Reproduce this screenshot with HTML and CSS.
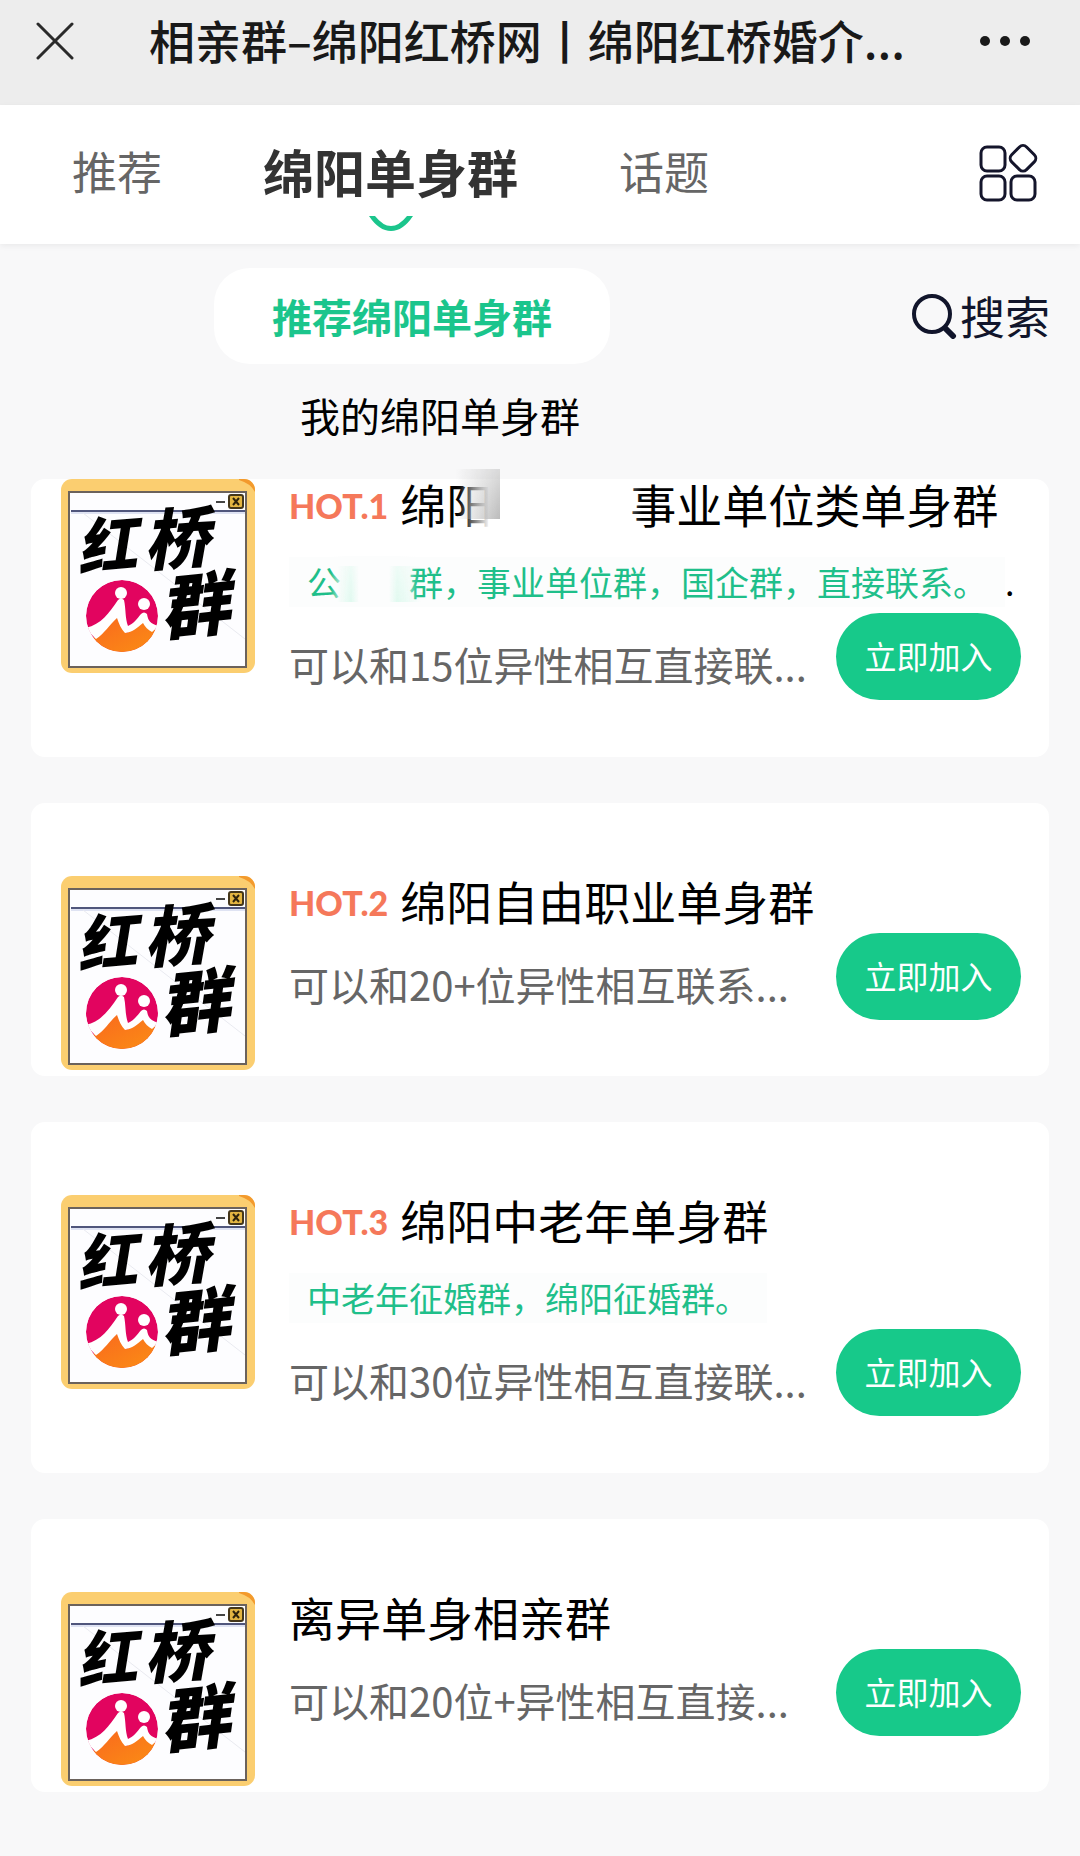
FILE: index.html
```html
<!DOCTYPE html>
<html lang="zh-CN">

<head>
  <meta charset="UTF-8">
  <meta name="viewport" content="width=device-width, initial-scale=1.0">
  <title>相亲群–绵阳红桥网</title>
  <link rel="stylesheet" href="styles.css">
</head>

<body>
  <!-- 群头像 -->
  <svg class="defs" width="0" height="0">
    <defs>
      <linearGradient id="orange" x1="0" y1="0" x2="1" y2="1">
        <stop offset="0" stop-color="#f9651f" />
        <stop offset="1" stop-color="#fb9213" />
      </linearGradient>
      <clipPath id="ball">
        <circle cx="61" cy="137" r="36" />
      </clipPath>
      <symbol id="avatar" viewBox="0 0 194 194">
        <rect width="194" height="194" rx="11" fill="#fbce70" />
        <path d="M178 0h5a11 11 0 0 1 11 11v2q-5-9-16-12z" fill="#f39a2d" />
        <rect x="8" y="13" width="177" height="175" fill="#fdfdff" stroke="#6b625c" stroke-width="2" />
        <path d="M10 32h174" stroke="#50567c" stroke-width="2" />
        <path d="M10 34h174" stroke="#dfe3f3" stroke-width="2" />
        <path d="M22 34L184 160" stroke="#e9eaf0" stroke-width="1" />
        <path d="M155 23h9" stroke="#444" stroke-width="2" />
        <rect x="168" y="16" width="14" height="13" rx="2" fill="#e3b542" stroke="#44361a" stroke-width="2" />
        <path d="M172 19l6 7M178 19l-6 7" stroke="#2e230c" stroke-width="2" />
        <g clip-path="url(#ball)">
          <circle cx="61" cy="137" r="36" fill="#e2045f" />
          <path d="M24 166L56 138l10 16 17-13 16 14v25H20z" fill="url(#orange)" />
          <path d="M24 149C40 146 48 134 57 121q3-3 6 0c2 9 1 18 4 26 5-2 9-7 13-12q3-3 6 0c1 7 4 10 12 12l-7 6c-4-2-7-5-9-9-6 5-10 9-18 10-4-4-6-9-8-15-8 7-12 15-21 21z" fill="#fff" />
        </g>
        <circle cx="60" cy="114" r="6" fill="#fff" />
        <circle cx="83" cy="125" r="6" fill="#fff" />
        <text class="brush" x="15" y="88" font-size="60" transform="rotate(-5 50 60)">红</text>
        <text class="brush" x="82" y="84" font-size="66" transform="rotate(-4 120 58)">桥</text>
        <text class="brush" x="98" y="152" font-size="70" transform="rotate(-6 136 126)">群</text>
      </symbol>
    </defs>
  </svg>

  <header class="topbar">
    <button class="icon-btn" aria-label="关闭">
      <svg width="38" height="38" viewBox="0 0 38 38" fill="none" stroke="#2a2a2a" stroke-width="3" stroke-linecap="round">
        <path d="M2 2l34 34M36 2L2 36" />
      </svg>
    </button>
    <h1>相亲群–绵阳红桥网丨绵阳红桥婚介...</h1>
    <button class="icon-btn" aria-label="更多">
      <svg width="50" height="12" viewBox="0 0 50 12" fill="#191919">
        <circle cx="5" cy="6" r="5" />
        <circle cx="25" cy="6" r="5" />
        <circle cx="45" cy="6" r="5" />
      </svg>
    </button>
  </header>

  <nav class="tabs">
    <a href="#">推荐</a>
    <a href="#" class="active">绵阳单身群
      <svg class="smile" width="44" height="18" viewBox="0 0 44 18" fill="#1bc58c">
        <path d="M0 1h6q16 20 32 0h6Q34 16 22 16T0 1z" />
      </svg>
    </a>
    <a href="#">话题</a>
    <button class="icon-btn grid-btn" aria-label="分类">
      <svg width="60" height="60" viewBox="0 0 60 60" fill="none" stroke="#14152b" stroke-width="3">
        <rect x="3" y="4" width="24" height="24" rx="6" />
        <rect x="3" y="33" width="24" height="24" rx="6" />
        <rect x="33" y="33" width="24" height="24" rx="6" />
        <rect x="34" y="5" width="21" height="21" rx="5" transform="rotate(45 45 16)" />
      </svg>
    </button>
  </nav>

  <section class="filter">
    <div class="filter-list">
      <a href="#" class="filter-item active">推荐绵阳单身群</a>
      <a href="#" class="filter-item">我的绵阳单身群</a>
    </div>
    <button class="search">
      <svg width="46" height="46" viewBox="0 0 46 46" fill="none" stroke="#11152b" stroke-linecap="round">
        <circle cx="21" cy="21" r="18" stroke-width="4" />
        <path d="M35 36l7 7" stroke-width="6" />
      </svg>搜索
    </button>
  </section>

  <main class="groups">
    <article class="card first">
      <svg class="avatar" role="img" aria-label="红桥群"><use href="#avatar" /></svg>
      <div class="info">
        <h2><span class="hot">HOT.1</span><span>绵阳<i class="smudge"></i>事业单位类单身群</span></h2>
        <p class="tag-line"><span class="tag">公<i class="smudge green"></i>群，事业单位群，国企群，直接联系。</span>.</p>
        <div class="foot">
          <p class="desc">可以和15位异性相互直接联...</p>
          <button class="join">立即加入</button>
        </div>
      </div>
    </article>

    <article class="card">
      <svg class="avatar" role="img" aria-label="红桥群"><use href="#avatar" /></svg>
      <div class="info">
        <h2><span class="hot">HOT.2</span><span>绵阳自由职业单身群</span></h2>
        <div class="foot">
          <p class="desc">可以和20+位异性相互联系...</p>
          <button class="join">立即加入</button>
        </div>
      </div>
    </article>

    <article class="card">
      <svg class="avatar" role="img" aria-label="红桥群"><use href="#avatar" /></svg>
      <div class="info">
        <h2><span class="hot">HOT.3</span><span>绵阳中老年单身群</span></h2>
        <p class="tag-line"><span class="tag">中老年征婚群，绵阳征婚群。</span></p>
        <div class="foot">
          <p class="desc">可以和30位异性相互直接联...</p>
          <button class="join">立即加入</button>
        </div>
      </div>
    </article>

    <article class="card">
      <svg class="avatar" role="img" aria-label="红桥群"><use href="#avatar" /></svg>
      <div class="info">
        <h2><span>离异单身相亲群</span></h2>
        <div class="foot">
          <p class="desc">可以和20位+异性相互直接...</p>
          <button class="join">立即加入</button>
        </div>
      </div>
    </article>
  </main>
</body>

</html>
```
FILE: styles.css
```css
* {
  margin: 0;
  padding: 0;
  box-sizing: border-box;
}

body {
  font-family: 'Noto Sans CJK SC', sans-serif;
  background: #f8f8f9;
  color: #000;
  min-height: 100vh;
}

a {
  color: inherit;
  text-decoration: none;
}

button {
  font-family: inherit;
  border: none;
  background: none;
  cursor: pointer;
}

svg {
  display: block;
}

.defs {
  position: absolute;
}

/* 顶部标题栏 */
.topbar {
  display: flex;
  align-items: center;
  justify-content: space-between;
  height: 105px;
  padding: 0 50px 24px 36px;
  background: #ededed;
}

.topbar h1 {
  padding-bottom: 4px;
  font-size: 46px;
  line-height: 60px;
  font-weight: 500;
  color: #191919;
  white-space: nowrap;
}

/* 导航 */
.tabs {
  display: flex;
  align-items: center;
  gap: 101px;
  height: 139px;
  padding: 0 42px 4px 72px;
  background: #fff;
  box-shadow: 0 2px 6px rgba(0, 0, 0, 0.06);
  font-size: 45px;
  line-height: 60px;
  color: #666;
}

.tabs a {
  padding-bottom: 4px;
}

.tabs .active {
  position: relative;
  font-size: 51px;
  font-weight: bold;
  color: #333;
}

.smile {
  position: absolute;
  left: 50%;
  bottom: -28px;
  margin-left: -22px;
}

.grid-btn {
  margin-left: auto;
}

/* 筛选 + 搜索 */
.filter {
  display: flex;
  justify-content: space-between;
  align-items: flex-start;
  padding: 24px 30px 18px 214px;
}

.filter-list {
  display: flex;
  flex-direction: column;
  align-items: flex-start;
  gap: 5px;
}

.filter-item {
  padding: 10px 86px;
  font-size: 40px;
  line-height: 72px;
}

.filter-item.active {
  padding: 12px 58px;
  border-radius: 36px;
  background: #fff;
  font-weight: bold;
  color: #1bc58c;
}

.search {
  display: flex;
  align-items: center;
  gap: 3px;
  font-size: 45px;
  line-height: 96px;
  color: #11152b;
}

/* 群列表 */
.groups {
  display: flex;
  flex-direction: column;
  gap: 46px;
  padding: 0 31px 66px;
}

.card {
  display: flex;
  align-items: flex-start;
  gap: 34px;
  padding: 73px 28px 6px 30px;
  border-radius: 14px;
  background: #fff;
}

.card.first {
  padding-top: 0;
}

.avatar {
  flex: none;
  width: 194px;
  height: 194px;
}

.brush {
  font-family: 'Noto Sans CJK SC', sans-serif;
  font-weight: 900;
  font-style: italic;
}

.info {
  flex: 1;
  min-width: 0;
}

.info h2 {
  display: flex;
  align-items: center;
  gap: 12px;
  height: 54px;
  font-size: 46px;
  line-height: 48px;
  font-weight: normal;
  white-space: nowrap;
  padding-bottom: 6px;
}

.hot {
  padding-top: 6px;
  font-family: Lato, sans-serif;
  font-size: 34px;
  font-weight: 900;
  color: #f5785a;
}

.tag-line {
  margin: 24px 0 6px;
  font-size: 34px;
  line-height: 50px;
  white-space: nowrap;
}

.tag {
  display: inline-block;
  padding: 0 18px;
  background: #fcfdfd;
  color: #1fbf8a;
}

.tag-line + .foot {
  padding-bottom: 51px;
}

.foot {
  display: flex;
  align-items: flex-end;
  justify-content: space-between;
  margin-top: 3px;
}

.desc {
  font-size: 40px;
  line-height: 72px;
  color: #666;
  white-space: nowrap;
}

.join {
  flex: none;
  width: 185px;
  height: 87px;
  padding-bottom: 4px;
  border-radius: 44px;
  background: #17c98a;
  color: #fff;
  font-size: 32px;
}

/* 涂抹掉的字 */
.smudge {
  display: inline-block;
  position: relative;
  width: 3em;
  height: 20px;
}

.smudge::before {
  content: '';
  position: absolute;
  left: -32px;
  right: -12px;
  top: -20px;
  bottom: -8px;
  background: linear-gradient(to right, rgba(255, 255, 255, 0), #fff 30px, #fff 148px, rgba(255, 255, 255, 0));
}

.smudge::after {
  content: '';
  position: absolute;
  left: -36px;
  top: -34px;
  width: 44px;
  height: 50px;
  background: linear-gradient(to right, rgba(190, 190, 190, 0), #bbb);
  -webkit-mask-image: linear-gradient(to bottom, rgba(0, 0, 0, 0.5), #000);
  mask-image: linear-gradient(to bottom, rgba(0, 0, 0, 0.5), #000);
}

.smudge.green {
  width: 2em;
}

.smudge.green::before {
  left: -10px;
  right: -6px;
  background: linear-gradient(to right, rgba(255, 255, 255, 0), #fcfdfd 14px, #fcfdfd 68px, rgba(255, 255, 255, 0));
}

.smudge.green::after {
  left: -4px;
  top: -10px;
  width: 84px;
  height: 36px;
  background: linear-gradient(to right, rgba(255, 255, 255, 0), rgba(213, 248, 234, 0.7) 14px, rgba(255, 255, 255, 0) 22px, rgba(255, 255, 255, 0) 52px, rgba(213, 248, 234, 0.7) 60px, rgba(255, 255, 255, 0));
}
```
